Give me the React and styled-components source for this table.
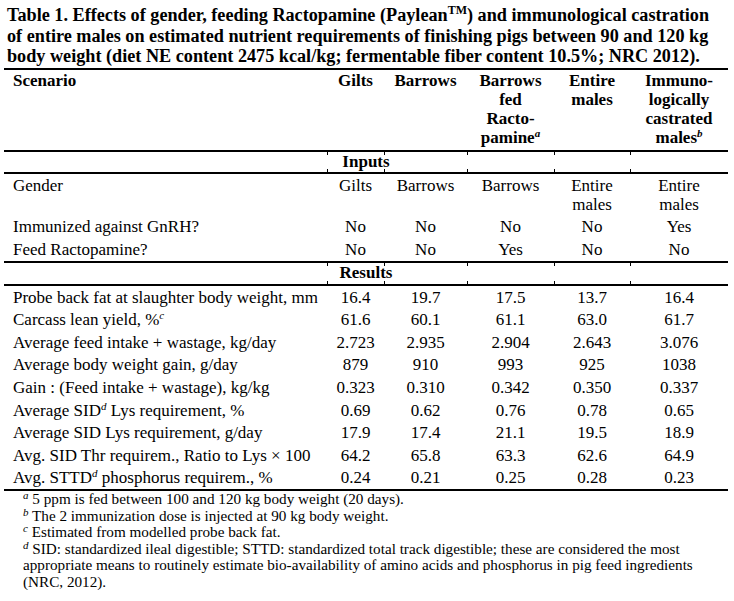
import React from 'react';
import styled, { createGlobalStyle } from 'styled-components';

const GlobalStyle = createGlobalStyle`
  html, body {
    margin: 0;
    padding: 0;
    background: #fff;
  }
  body {
    font-family: 'Liberation Serif', 'Times New Roman', serif;
    color: #000;
  }
`;

const Page = styled.div`
  width: 734px;
  padding: 5px 6px 0 4px;
  box-sizing: border-box;
`;

const Title = styled.div`
  padding-left: 3px;
  margin-bottom: 1.5px;
  font-size: 18.2px;
  font-weight: bold;
  line-height: 20.5px;
  white-space: nowrap;
`;

const Tm = styled.sup`
  font-size: 12px;
  line-height: 0;
  vertical-align: 7px;
`;

const Sup = styled.sup`
  font-size: 11px;
  font-style: italic;
  line-height: 0;
  vertical-align: 6px;
`;

const Table = styled.table`
  width: 724px;
  table-layout: fixed;
  border-collapse: separate;
  border-spacing: 0;
  border-top: 2px solid #000;
  border-bottom: 2px solid #000;
  font-size: 17px;
  line-height: 19px;
`;

const HeadCell = styled.th`
  padding: 1px 2px 3px;
  font-weight: bold;
  text-align: ${(p) => (p.$left ? 'left' : 'center')};
  padding-left: ${(p) => (p.$left ? '9px' : '2px')};
  vertical-align: top;
  border-bottom: 2px solid #000;
`;

// full-width section row ("Inputs", "Results") with the little column ticks
const ticks = [323, 380, 463, 550, 626]
  .map((x) => `linear-gradient(#000, #000) ${x}px 0 / 1px 3px no-repeat, linear-gradient(#000, #000) ${x}px 100% / 1px 3px no-repeat`)
  .join(', ');

const SectionCell = styled.td`
  padding: 0 0 ${(p) => p.$pb}px;
  font-weight: bold;
  text-align: center;
  border-bottom: 2px solid #000;
  background: ${ticks};
`;

const LabelCell = styled.td`
  padding: 1.8px 4px 1.8px 9px;
  vertical-align: top;
  white-space: nowrap;
  border-bottom: ${(p) => (p.$rule ? '2px solid #000' : 'none')};
`;

const ValueCell = styled.td`
  padding: 1.8px 2px;
  text-align: center;
  vertical-align: top;
  border-bottom: ${(p) => (p.$rule ? '2px solid #000' : 'none')};
`;

const Notes = styled.div`
  padding: 0 0 0 19px;
  font-size: 15.2px;
  line-height: 16.5px;
  white-space: nowrap;
`;

const NoteSup = styled.sup`
  font-size: 11px;
  font-style: italic;
  line-height: 0;
  vertical-align: 5px;
`;

const widths = [323, 57, 83, 87, 76, 98];

const inputs = [
  { label: 'Gender', values: ['Gilts', 'Barrows', 'Barrows', <>Entire<br />males</>, <>Entire<br />males</>] },
  { label: 'Immunized against GnRH?', values: ['No', 'No', 'No', 'No', 'Yes'] },
  { label: 'Feed Ractopamine?', values: ['No', 'No', 'Yes', 'No', 'No'] },
];

const results = [
  { label: 'Probe back fat at slaughter body weight, mm', values: ['16.4', '19.7', '17.5', '13.7', '16.4'] },
  { label: <>Carcass lean yield, %<Sup>c</Sup></>, values: ['61.6', '60.1', '61.1', '63.0', '61.7'] },
  { label: 'Average feed intake + wastage, kg/day', values: ['2.723', '2.935', '2.904', '2.643', '3.076'] },
  { label: 'Average body weight gain, g/day', values: ['879', '910', '993', '925', '1038'] },
  { label: 'Gain : (Feed intake + wastage), kg/kg', values: ['0.323', '0.310', '0.342', '0.350', '0.337'] },
  { label: <>Average SID<Sup>d</Sup> Lys requirement, %</>, values: ['0.69', '0.62', '0.76', '0.78', '0.65'] },
  { label: 'Average SID Lys requirement, g/day', values: ['17.9', '17.4', '21.1', '19.5', '18.9'] },
  { label: 'Avg. SID Thr requirem., Ratio to Lys × 100', values: ['64.2', '65.8', '63.3', '62.6', '64.9'] },
  { label: <>Avg. STTD<Sup>d</Sup> phosphorus requirem., %</>, values: ['0.24', '0.21', '0.25', '0.28', '0.23'] },
];

const DataRow = ({ row, rule }) => (
  <tr>
    <LabelCell $rule={rule}>{row.label}</LabelCell>
    {row.values.map((v, i) => (
      <ValueCell key={i} $rule={rule}>{v}</ValueCell>
    ))}
  </tr>
);

const App = () => (
  <Page>
    <GlobalStyle />
    <Title>
      Table 1. Effects of gender, feeding Ractopamine (Paylean<Tm>TM</Tm>) and immunological castration
      <br />
      of entire males on estimated nutrient requirements of finishing pigs between 90 and 120 kg
      <br />
      body weight (diet NE content 2475 kcal/kg; fermentable fiber content 10.5%; NRC 2012).
    </Title>
    <Table>
      <colgroup>
        {widths.map((w, i) => (
          <col key={i} style={{ width: w }} />
        ))}
      </colgroup>
      <thead>
        <tr>
          <HeadCell $left>Scenario</HeadCell>
          <HeadCell>Gilts</HeadCell>
          <HeadCell>Barrows</HeadCell>
          <HeadCell>
            Barrows<br />fed<br />Racto-<br />pamine<Sup>a</Sup>
          </HeadCell>
          <HeadCell>
            Entire<br />males
          </HeadCell>
          <HeadCell>
            Immuno-<br />logically<br />castrated<br />males<Sup>b</Sup>
          </HeadCell>
        </tr>
      </thead>
      <tbody>
        <tr>
          <SectionCell colSpan={6} $pb={1}>Inputs</SectionCell>
        </tr>
        {inputs.map((row, i) => (
          <DataRow key={i} row={row} rule={i === inputs.length - 1} />
        ))}
        <tr>
          <SectionCell colSpan={6} $pb={2}>Results</SectionCell>
        </tr>
        {results.map((row, i) => (
          <DataRow key={i} row={row} />
        ))}
      </tbody>
    </Table>
    <Notes>
      <NoteSup>a</NoteSup> 5 ppm is fed between 100 and 120 kg body weight (20 days).
      <br />
      <NoteSup>b</NoteSup> The 2 immunization dose is injected at 90 kg body weight.
      <br />
      <NoteSup>c</NoteSup> Estimated from modelled probe back fat.
      <br />
      <NoteSup>d</NoteSup> SID: standardized ileal digestible; STTD: standardized total track digestible; these are considered the most
      <br />
      appropriate means to routinely estimate bio-availability of amino acids and phosphorus in pig feed ingredients
      <br />
      (NRC, 2012).
    </Notes>
  </Page>
);

export default App;
